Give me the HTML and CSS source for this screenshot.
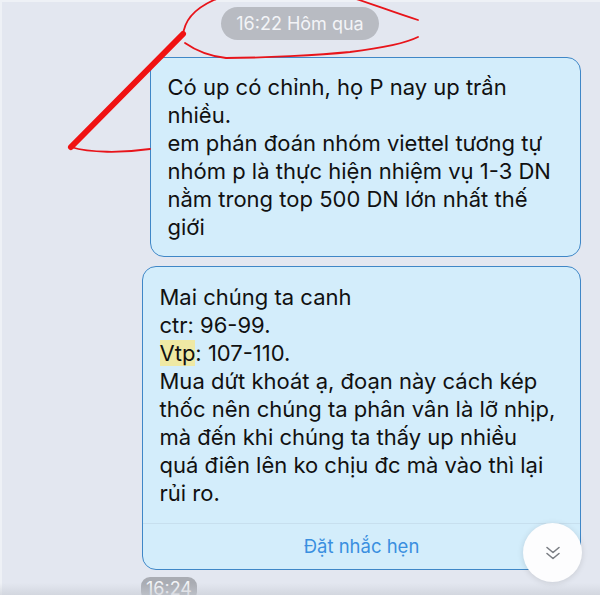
FILE: index.html
```html
<!DOCTYPE html>
<html lang="vi">
<head>
<meta charset="utf-8">
<title>Chat</title>
<link rel="stylesheet" href="styles.css">
</head>
<body>
<div class="screen">
  <div class="chat">
    <div class="time-row"><span class="time-pill">16:22 Hôm qua</span></div>
    <div class="bubble b1">
      <p class="msg">Có up có chỉnh, họ P nay up trần<br>nhiều.<br>em phán đoán nhóm viettel tương tự<br>nhóm p là thực hiện nhiệm vụ 1-3 DN<br>nằm trong top 500 DN lớn nhất thế<br>giới</p>
    </div>
    <div class="bubble b2">
      <p class="msg">Mai chúng ta canh<br>ctr: 96-99.<br><mark class="hl">Vtp</mark>: 107-110.<br>Mua dứt khoát ạ, đoạn này cách kép<br>thốc nên chúng ta phân vân là lỡ nhịp,<br>mà đến khi chúng ta thấy up nhiều<br>quá điên lên ko chịu đc mà vào thì lại<br>rủi ro.</p>
      <div class="action">Đặt nhắc hẹn</div>
    </div>
    <div class="time-row left"><span class="time-pill small">16:24</span></div>
  </div>
  <div class="bottom-bar"></div>
  <button class="scroll-btn" aria-label="Cuộn xuống">
    <svg width="18" height="18" viewBox="0 0 18 18" fill="none" stroke="#7a7d83" stroke-width="1.6" stroke-linecap="round" stroke-linejoin="round"><path d="M3 3.5 L9 8.5 L15 3.5"/><path d="M3 9.5 L9 14.5 L15 9.5"/></svg>
  </button>
  <svg class="ink" width="600" height="600" viewBox="0 0 600 600" fill="none" stroke-linecap="round" stroke-linejoin="round">
    <path d="M183,36 C184,20 196,8 214,0 C226,-5 250,-6 270,-6 L340,-6 C362,0 392,12 418,20" stroke="#e8141a" stroke-width="1.8"/>
    <path d="M185,43 C195,50 208,56 226,58 C262,58 320,55 350,52 C382,48 404,44 418,37" stroke="#e8141a" stroke-width="1.8"/>
    <path d="M183,34 L71,147" stroke="#f01212" stroke-width="6"/>
    <path d="M71,147 C90,153 122,153 150,149" stroke="#e8141a" stroke-width="1.8"/>
  </svg>
</div>
</body>
</html>
```

FILE: styles.css
```css
* { box-sizing: border-box; }
html, body { margin: 0; padding: 0; }
body { width: 600px; height: 600px; overflow: hidden; background: #e3e7f0; font-family: Inter, "Liberation Sans", Arial, sans-serif; }
.screen { position: relative; width: 600px; height: 600px; overflow: hidden; box-shadow: inset 2px 2px 0 #eef1f6; }
.chat { display: flex; flex-direction: column; align-items: flex-end; padding: 7px 19px 0 0; }
.time-row { align-self: stretch; display: flex; justify-content: center; padding-left: 19px; }
.time-row.left { justify-content: flex-start; padding-left: 141px; margin-top: 7px; }
.time-pill { display: inline-flex; align-items: center; height: 33px; padding: 0 15px; border-radius: 17px; background: #b8bbc2; color: #f3f4f7; font-size: 18px; }
.time-pill.small { height: 24px; padding: 0 5px; border-radius: 9px; background: #a9acb3; font-size: 18px; align-items: flex-start; padding-top: 1px; }
.bubble { background: #d3edfb; border: 1.5px solid #3f87c7; border-radius: 14px; }
.b1 { width: 431px; height: 200px; margin-top: 17px; padding: 15px 8px 14px 16.5px; }
.b2 { width: 439px; height: 304px; margin-top: 9px; }
.b2 .msg { padding: 16px 8px 16px 16.5px; }
.msg { margin: 0; font-size: 22px; line-height: 28px; color: #111; white-space: nowrap; }
.hl { background: #efe9a4; color: inherit; padding: 0; }
.action { border-top: 1px solid #c7dfee; height: 46px; display: flex; align-items: center; justify-content: center; color: #3a8fe0; font-size: 18.5px; padding-bottom: 2px; }
.bottom-bar { position: absolute; left: 0; right: 0; bottom: 0; height: 17px; background: linear-gradient(to bottom, rgba(200,204,212,0) 0, rgba(200,204,212,0.6) 12px, #ffffff 12px, #ffffff 100%); }
.scroll-btn { position: absolute; left: 523px; top: 523px; width: 59px; height: 59px; border-radius: 50%; border: none; background: #fdfdfe; box-shadow: 0 1px 6px rgba(0,0,0,0.12); display: flex; align-items: center; justify-content: center; padding: 0; }
.ink { position: absolute; left: 0; top: 0; pointer-events: none; }
```
